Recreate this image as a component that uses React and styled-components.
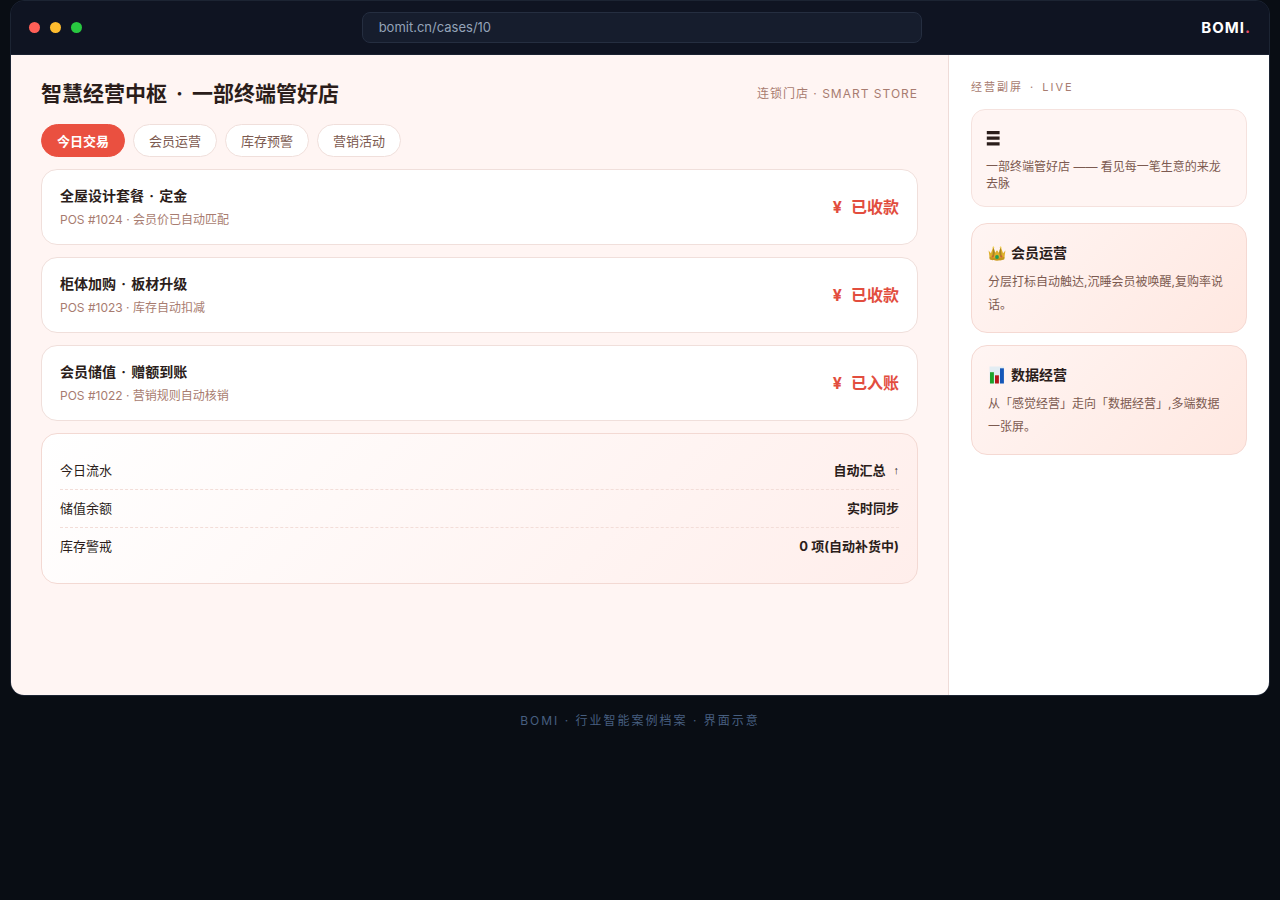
import { useState } from "react";
import styled, { createGlobalStyle } from "styled-components";

const GlobalStyle = createGlobalStyle`
  * {
    box-sizing: border-box;
  }

  body {
    margin: 0;
    background: #090d14;
    color: #2b1d1a;
    font-family: Inter, "Noto Sans CJK SC", sans-serif;
    font-size: 14px;
  }

  h1, h2, h3, p, ul, dl, dd {
    margin: 0;
    padding: 0;
  }
`;

// Window
const Page = styled.div`
  padding: 0 10px 40px;
`;

const Window = styled.div`
  border: 1px solid #1c2433;
  border-radius: 14px;
  overflow: hidden;
  background: #0f1422;
`;

const TitleBar = styled.header`
  display: flex;
  align-items: center;
  padding: 11px 18px;
  background: #0f1422;
  border-bottom: 1px solid #1a2131;
`;

const Lights = styled.div`
  display: flex;
  gap: 10px;
`;

const Light = styled.span`
  width: 11px;
  height: 11px;
  border-radius: 50%;
  background: ${({ $color }) => $color};
`;

const Address = styled.input`
  flex: 1;
  min-width: 0;
  max-width: 560px;
  height: 31px;
  margin: 0 auto;
  padding: 0 16px 1px;
  border: 1px solid #252e40;
  border-radius: 8px;
  background: #161d2d;
  color: #94a3b8;
  font-family: inherit;
  font-size: 13px;
`;

const Brand = styled.span`
  color: #ffffff;
  font-size: 15px;
  font-weight: 700;
  letter-spacing: 1px;

  span {
    color: #ea4f6a;
  }
`;

const Columns = styled.div`
  display: grid;
  grid-template-columns: minmax(0, 1fr) 320px;
  min-height: 640px;
`;

// Main column
const Main = styled.main`
  display: flex;
  flex-direction: column;
  gap: 12px;
  padding: 24px 30px;
  background: #fff5f3;
  border-right: 1px solid #efdcd8;
`;

const Heading = styled.div`
  display: flex;
  align-items: center;
  justify-content: space-between;
  margin-bottom: 3px;
`;

const Title = styled.h1`
  font-size: 21px;
  font-weight: 700;
  line-height: 30px;
`;

const Dot = styled.span`
  margin: 0 ${({ $space }) => $space || "2px"};
`;

const Tagline = styled.span`
  color: #a87c70;
  font-size: 12px;
  letter-spacing: 1px;
  line-height: 16px;
`;

const Tabs = styled.div`
  display: flex;
  gap: 8px;
`;

const Tab = styled.button`
  height: 33px;
  padding: 0 15px 1px;
  border: 1px solid ${({ $active }) => ($active ? "#ea5040" : "#f0dfdb")};
  border-radius: 17px;
  background: ${({ $active }) => ($active ? "#ea5040" : "#ffffff")};
  color: ${({ $active }) => ($active ? "#ffffff" : "#7c5a50")};
  font-family: inherit;
  font-size: 13px;
  font-weight: ${({ $active }) => ($active ? 700 : 400)};
  cursor: pointer;
`;

const Order = styled.article`
  display: flex;
  align-items: center;
  justify-content: space-between;
  padding: 16px 18px;
  border: 1px solid #f0dfdb;
  border-radius: 16px;
  background: #ffffff;
`;

const OrderName = styled.h2`
  margin-bottom: 5px;
  font-size: 14px;
  font-weight: 700;
  line-height: 20px;
`;

const OrderNote = styled.p`
  color: #a87c70;
  font-size: 12px;
  line-height: 17px;
`;

const Amount = styled.span`
  display: flex;
  align-items: baseline;
  gap: 9px;
  color: #e24d3e;
  font-size: 16px;
  font-weight: 700;
  line-height: 22px;
`;

const Summary = styled.dl`
  padding: 18px;
  border: 1px solid #f3d9d3;
  border-radius: 16px;
  background: linear-gradient(135deg, #ffffff, #ffeeeb);
`;

const SummaryRow = styled.div`
  display: flex;
  justify-content: space-between;
  padding: 9px 0;
  font-size: 13px;
  line-height: 19px;

  & + & {
    border-top: 1px dashed #f3ddd8;
  }
`;

const SummaryValue = styled.dd`
  display: flex;
  gap: 8px;
  font-weight: 700;
`;

const Trend = styled.span`
  font-family: "Liberation Sans", sans-serif;
  font-size: 11px;
`;

// Side column
const Side = styled.aside`
  padding: 22px;
  background: #ffffff;
`;

const SideTitle = styled.h2`
  margin-bottom: 12px;
  color: #a87c70;
  font-size: 11px;
  font-weight: 400;
  letter-spacing: 2px;
  line-height: 20px;
`;

const MenuCard = styled.section`
  margin-bottom: 16px;
  padding: 14px;
  border: 1px solid #f5e2de;
  border-radius: 14px;
  background: #fff5f3;
  color: #7c5a50;
  font-size: 12px;
  line-height: 17px;
`;

const MenuIcon = styled.div`
  display: flex;
  align-items: center;
  height: 28px;
  margin-bottom: 6px;
`;

const Feature = styled.section`
  padding: 16px;
  border: 1px solid #f5d9d3;
  border-radius: 16px;
  background: linear-gradient(135deg, #fff5f3, #ffe8e1);

  & + & {
    margin-top: 12px;
  }
`;

const FeatureTitle = styled.h3`
  display: flex;
  align-items: center;
  gap: 5px;
  margin-bottom: 4px;
  font-size: 14px;
  font-weight: 700;
  line-height: 26px;
`;

const FeatureText = styled.p`
  color: #7c5a50;
  font-size: 12px;
  line-height: 23px;
`;

const Footer = styled.footer`
  padding-top: 16px;
  color: #475f80;
  font-size: 12px;
  letter-spacing: 2px;
  line-height: 18px;
  text-align: center;
`;

const BarsIcon = () => (
  <svg width="14" height="16" viewBox="0 0 14 16" fill="#2b1d1a" aria-hidden="true">
    <path d="M.8 1h12.8v3.2H.8zM.8 6.6h12.8v3.2H.8zM.8 12.2h12.8v3.2H.8z" />
  </svg>
);

const CrownIcon = () => (
  <svg width="18" height="18" viewBox="0 0 18 18" aria-hidden="true">
    <path
      d="M.6 6.6l2.3 2.6 2.5-6.6 1.7 6.2L9 6.2l1.9 2.6 1.7-6.2 2.5 6.6 2.3-2.6-1.2 8.6c-3.4 1.6-11 1.6-14.4 0z"
      fill="#dfb02c"
    />
    <path d="M5.4 2.6l1.4 6.2-.9 4-1.6-.6zM12.6 2.6l-1.4 6.2.9 4 1.6-.6z" fill="#a98420" />
    <path d="M1.5 12.7c3.6 1.5 11.4 1.5 15 0l-.3 2.5c-3.4 1.6-11 1.6-14.4 0z" fill="#c4951f" />
    <circle cx="5.4" cy="3.4" r=".9" fill="#f0cf55" />
    <circle cx="12.6" cy="3.4" r=".9" fill="#f0cf55" />
    <circle cx="9" cy="13" r="1.9" fill="#1f9d57" />
    <circle cx="4.6" cy="12.6" r="1" fill="#cf5a3c" />
    <circle cx="13.4" cy="12.6" r="1" fill="#cf5a3c" />
  </svg>
);

const ChartIcon = () => (
  <svg width="18" height="18" viewBox="0 0 18 18" aria-hidden="true">
    <path d="M1.5.5h14.6v17H1.5z" fill="#e3edf3" />
    <path d="M2 6.2h3.9v11.3H2z" fill="#1da32c" />
    <path d="M7 9.3h3.9v8.2H7z" fill="#b5161b" />
    <path d="M12 2.3h3.9v15.2H12z" fill="#1557b8" />
  </svg>
);

const tabs = ["今日交易", "会员运营", "库存预警", "营销活动"];

const orders = [
  { id: 1024, item: "全屋设计套餐", stage: "定金", note: "会员价已自动匹配", status: "已收款" },
  { id: 1023, item: "柜体加购", stage: "板材升级", note: "库存自动扣减", status: "已收款" },
  { id: 1022, item: "会员储值", stage: "赠额到账", note: "营销规则自动核销", status: "已入账" },
];

const summary = [
  { label: "今日流水", value: "自动汇总", trend: "↑" },
  { label: "储值余额", value: "实时同步" },
  { label: "库存警戒", value: "0 项(自动补货中)" },
];

const features = [
  { icon: <CrownIcon />, title: "会员运营", text: "分层打标自动触达,沉睡会员被唤醒,复购率说话。" },
  { icon: <ChartIcon />, title: "数据经营", text: "从「感觉经营」走向「数据经营」,多端数据一张屏。" },
];

const App = () => {
  const [active, setActive] = useState(tabs[0]);

  return (
    <>
      <GlobalStyle />
      <Page>
        <Window>
          <TitleBar>
            <Lights>
              <Light $color="#ff5f57" />
              <Light $color="#febc2e" />
              <Light $color="#28c840" />
            </Lights>
            <Address aria-label="网址" defaultValue="bomit.cn/cases/10" />
            <Brand>
              BOMI<span>.</span>
            </Brand>
          </TitleBar>

          <Columns>
            <Main>
              <Heading>
                <Title>
                  智慧经营中枢 <Dot $space="4px">·</Dot> 一部终端管好店
                </Title>
                <Tagline>
                  连锁门店 · SMART STORE
                </Tagline>
              </Heading>

              <Tabs>
                {tabs.map((tab) => (
                  <Tab key={tab} $active={tab === active} onClick={() => setActive(tab)}>
                    {tab}
                  </Tab>
                ))}
              </Tabs>

              {orders.map((order) => (
                <Order key={order.id}>
                  <div>
                    <OrderName>
                      {order.item} <Dot>·</Dot> {order.stage}
                    </OrderName>
                    <OrderNote>
                      POS #{order.id} · {order.note}
                    </OrderNote>
                  </div>
                  <Amount>
                    <span>¥</span>
                    {order.status}
                  </Amount>
                </Order>
              ))}

              <Summary>
                {summary.map((row) => (
                  <SummaryRow key={row.label}>
                    <dt>{row.label}</dt>
                    <SummaryValue>
                      {row.value}
                      {row.trend && <Trend>{row.trend}</Trend>}
                    </SummaryValue>
                  </SummaryRow>
                ))}
              </Summary>
            </Main>

            <Side>
              <SideTitle>
                经营副屏 <Dot>·</Dot> LIVE
              </SideTitle>
              <MenuCard>
                <MenuIcon>
                  <BarsIcon />
                </MenuIcon>
                <p>一部终端管好店 —— 看见每一笔生意的来龙去脉</p>
              </MenuCard>
              {features.map((feature) => (
                <Feature key={feature.title}>
                  <FeatureTitle>
                    {feature.icon}
                    {feature.title}
                  </FeatureTitle>
                  <FeatureText>{feature.text}</FeatureText>
                </Feature>
              ))}
            </Side>
          </Columns>
        </Window>
        <Footer>BOMI · 行业智能案例档案 · 界面示意</Footer>
      </Page>
    </>
  );
};

export default App;
